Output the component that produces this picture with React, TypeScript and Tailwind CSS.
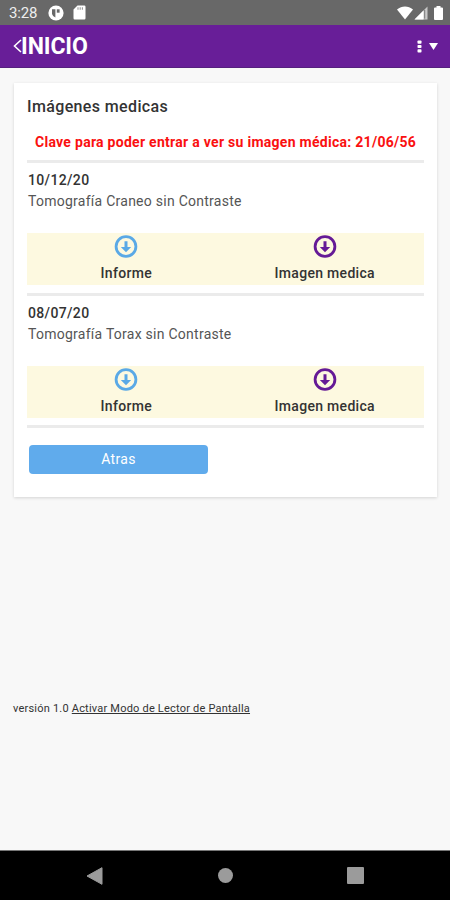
const studies = [
  { date: '10/12/20', name: 'Tomografía Craneo sin Contraste' },
  { date: '08/07/20', name: 'Tomografía Torax sin Contraste' },
];

function DownloadIcon({ className }: { className: string }) {
  return (
    <svg viewBox="0 0 24 24" className={`block size-6 ${className}`} fill="none">
      <circle cx="12" cy="11.500" r="9.900" stroke="currentColor" strokeWidth="2.800" />
      <path d="M10.500 6.200h3v5.800h3.700L12 17.200l-5.200-5.200h3.700z" fill="currentColor" />
    </svg>
  );
}

function StatusBar() {
  return (
    <div className="flex h-[25px] items-center bg-[#686868] pr-[7px] pl-[9px] text-white">
      <span className="w-[39px] pt-px text-[15px] leading-[25px] tracking-[-0.2px] text-[#eeeeee]">3:28</span>
      <svg viewBox="0 0 16 16" className="size-4">
        <circle cx="8" cy="8" r="7.6" fill="#fff" />
        <path d="M4 4.300h3.400v8.200A5 5 0 0 1 4 9z" fill="#686868" />
        <path d="M8.800 4.300h2.800v3.400H8.800z" fill="#686868" />
      </svg>
      <svg viewBox="0 0 13 15" className="ml-[9px] h-[15px] w-[13px]">
        <path d="M4.5.5h6.8A1.2 1.2 0 0 1 12.5 1.7v11.6a1.2 1.2 0 0 1-1.2 1.2H1.7A1.2 1.2 0 0 1 .5 13.300V4.500z" fill="#fff" />
        <path d="M5 2.300v2.500M7.200 2.300v2.500M9.400 2.300v2.500" stroke="#999" strokeWidth="1.100" />
      </svg>
      <svg viewBox="0 0 16 14" className="ml-auto h-[14px] w-4">
        <path d="M0 3.600C4.800-.6 11.200-.6 16 3.600L8 13.500z" fill="#fff" />
      </svg>
      <svg viewBox="0 0 14 14" className="ml-[1px] h-[14px] w-[14px]">
        <path d="M13.500.5v13H.5z" fill="#c8c8c8" />
        <path d="M9.500 4.500v9h-9z" fill="#fff" />
        <path d="M10.700 4v8.700" stroke="#777" strokeWidth="1" />
      </svg>
      <svg viewBox="0 0 9 14" className="ml-[6px] h-[14px] w-[9px]">
        <path d="M2.500 0h4v1.500H8a1 1 0 0 1 1 1V13a1 1 0 0 1-1 1H1a1 1 0 0 1-1-1V2.500a1 1 0 0 1 1-1h1.500z" fill="#fff" />
      </svg>
    </div>
  );
}

function Header() {
  return (
    <header className="flex h-[43px] items-center border-b border-[#55207e] bg-[#681e98] pr-[12px] pl-[13px] text-white">
      <svg viewBox="0 0 9 14" className="h-[14px] w-[9px]" fill="none">
        <path d="M8 1L1.500 7 8 13" stroke="#fff" strokeWidth="1.600" />
      </svg>
      <h1 className="-ml-px pt-[2px] text-[23px] leading-[40px] font-bold tracking-[-0.1px]">INICIO</h1>
      <svg viewBox="0 0 5 13" className="ml-auto h-[13px] w-[5px]" fill="#fff">
        <rect x=".5" y=".5" width="4" height="3.200" rx=".8" />
        <rect x=".5" y="4.900" width="4" height="3.200" rx=".8" />
        <rect x=".5" y="9.300" width="4" height="3.200" rx=".8" />
      </svg>
      <svg viewBox="0 0 9 7" className="ml-[7px] h-[7px] w-[9px]">
        <path d="M0 0h9L4.500 7z" fill="#fff" />
      </svg>
    </header>
  );
}

export default function App() {
  return (
    <div className="flex h-[900px] w-[450px] flex-col overflow-hidden bg-[#f8f8f8] font-['Roboto',sans-serif] text-[#333333]">
      <StatusBar />
      <Header />
      <main className="flex-1 px-[14px] pt-[15px]">
        <section className="h-[414px] w-[423px] bg-white px-[13px] pt-[13px] shadow-[0_1px_3px_rgba(0,0,0,0.15)]">
          <h2 className="text-[16px] leading-[22px] font-medium tracking-[0.37px]">Imágenes medicas</h2>
          <p className="mt-[14px] pl-2 text-[14px] leading-[20px] font-bold tracking-[0.28px] whitespace-nowrap text-[#fa1010]">
            Clave para poder entrar a ver su imagen médica: 21/06/56
          </p>
          <hr className="mt-[8px] border-0 border-t-[3px] border-[#ebebeb]" />
          {studies.map((study) => (
            <article key={study.date} className="h-[132.500px] border-b-[3px] border-[#ebebeb] pt-[7px]">
              <h3 className="pl-px text-[14px] leading-[20px] font-medium tracking-[0.350px]">{study.date}</h3>
              <p className="mt-px pl-px text-[14px] leading-[20px] tracking-[0.26px] text-[#555555]">{study.name}</p>
              <div className="mt-[22px] grid h-[52px] grid-cols-2 bg-[#fdf9e0] text-[14px] leading-[20px] font-medium tracking-[0.300px]">
                <a className="flex flex-col items-center pt-[2px]">
                  <DownloadIcon className="text-[#5aa9e6]" />
                  <span className="mt-[4px]">Informe</span>
                </a>
                <a className="flex flex-col items-center pt-[2px]">
                  <DownloadIcon className="text-[#651a96]" />
                  <span className="mt-[4px]">Imagen medica</span>
                </a>
              </div>
            </article>
          ))}
          <button className="mt-[17px] ml-[2px] block h-[29px] w-[179px] rounded-[4px] bg-[#60abec] text-[14px] leading-[29px] tracking-[0.300px] text-white">
            Atras
          </button>
        </section>
        <p className="mt-[205px] -ml-px text-[11px] leading-[14px] tracking-[0.21px] whitespace-nowrap">
          versión 1.0 <a className="underline">Activar Modo de Lector de Pantalla</a>
        </p>
      </main>
      <nav className="flex h-[50px] items-center justify-between border-t border-[#777777] bg-black pr-[86px] pl-[86px]">
        <svg viewBox="0 0 17 18" className="h-[18px] w-[17px]">
          <path d="M16 .7v16.600L1 9z" fill="#9b9b9b" stroke="#9b9b9b" strokeLinejoin="round" />
        </svg>
        <span className="size-[15px] rounded-full bg-[#9b9b9b]" />
        <span className="size-[17px] rounded-[1px] bg-[#9b9b9b]" />
      </nav>
    </div>
  );
}
